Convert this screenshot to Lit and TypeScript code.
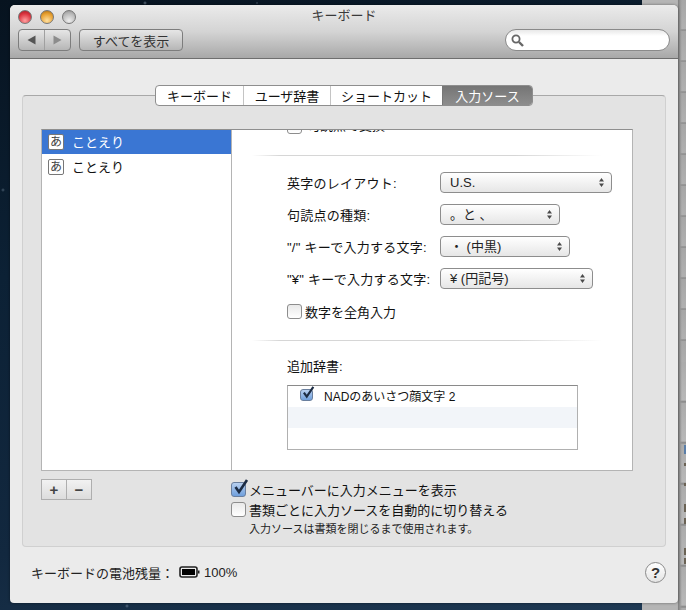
import { LitElement, html, css } from "lit";
import { customElement } from "lit/decorators.js";

const updown = html`<svg class="ud" width="7" height="11" viewBox="0 0 7 11"><path d="M3.5 1 L6 4.5 L1 4.5Z M3.5 10 L6 6.5 L1 6.5Z" fill="#4a4a4a"/></svg>`;
const check = () => html`<svg class="chk" width="17" height="17" viewBox="0 0 17 17"><path d="M3.5 8 L7 13 L15 1" fill="none" stroke="#1c2c44" stroke-width="2.6"/></svg>`;

@customElement("app-root")
export class AppRoot extends LitElement {
  static styles = css`
    :host {
      display: block; width: 686px; height: 610px; overflow: hidden; position: relative;
      background:
        radial-gradient(circle at 3px 190px, rgba(180,200,220,.35) 0, transparent 2px),
        radial-gradient(circle at 145px 3px, rgba(180,200,220,.5) 0, transparent 2px),
        radial-gradient(circle at 257px 3px, rgba(180,200,220,.3) 0, transparent 1.5px),
        radial-gradient(circle at 127px 606px, rgba(180,200,220,.4) 0, transparent 2px),
        linear-gradient(165deg, #07131f 0%, #0c2135 35%, #12283f 70%, #1f3a55 100%);
      font-family: "Liberation Sans", "Noto Sans CJK JP", sans-serif; color: #111;
    }
    .behind { position: absolute; left: 642px; top: 0; width: 44px; height: 610px;
      background: linear-gradient(90deg, #b5b5b5 0, #b5b5b5 80%, #a2a2a2 84%, #c8c8c8 100%); }
    .behind-lines { position: absolute; left: 678px; top: 0; width: 8px; height: 362px;
      background: linear-gradient(90deg, #7c7c7c 0, #989898 25%, transparent 50%),
        repeating-linear-gradient(180deg, #a6a6a6 0, #b0b0b0 29px, #7f7f7f 30px, #a6a6a6 31px); }
    .behind-low { position: absolute; left: 678px; top: 362px; width: 8px; height: 248px;
      background: linear-gradient(90deg, #7c7c7c 0, #989898 25%, transparent 50%),
        repeating-linear-gradient(180deg, #ababab 0, #b8b8b8 38px, #7f7f7f 40px, #ababab 41px); }
    .spot { position: absolute; left: 684px; width: 2px; background: #6b6355; }
    .spot.blue { background: #5a7ea8; }
    .window { position: absolute; left: 10px; top: 5px; width: 668px; height: 598px; background: #ebebeb;
      border-radius: 5px 5px 4px 4px; display: flex; flex-direction: column; overflow: hidden; box-shadow: 0 0 3px rgba(0,0,0,.45); }
    .titlebar { height: 54px; flex: none; box-sizing: border-box; border-bottom: 1px solid #6e6e6e;
      background: linear-gradient(180deg, #ebebeb 0%, #d4d4d4 50%, #a8a8a8 100%); position: relative; }
    .lights { position: absolute; left: 8px; top: 5px; display: flex; gap: 8px; }
    .light { width: 12px; height: 12px; border-radius: 50%; border: 0.5px solid #777; }
    .red { background: radial-gradient(circle at 50% 80%, #ffa0a0, #dc3540 60%, #a01820); }
    .amber { background: radial-gradient(circle at 50% 80%, #ffe0a0, #e8a030 60%, #a86a10); }
    .gray { background: radial-gradient(circle at 50% 80%, #eee, #bbb 60%, #8f8f8f); }
    .title { position: absolute; left: 0; right: 0; top: 2px; text-align: center; font-size: 13px; line-height: 18px; color: #3a3a3a; }
    .tools { position: absolute; left: 8px; top: 24px; right: 8px; display: flex; align-items: center; }
    .btn { height: 22px; box-sizing: border-box; border: 1px solid #7d7d7d; border-radius: 4px;
      background: linear-gradient(180deg, #e6e6e6, #b6b6b6); display: flex; align-items: center; justify-content: center; }
    .nav { width: 53px; }
    .nav span { flex: 1; display: flex; justify-content: center; align-items: center; height: 100%; }
    .nav span + span { border-left: 1px solid #a0a0a0; }
    .all { width: 104px; margin-left: 8px; font-size: 13px; color: #333; }
    .search { margin-left: auto; width: 165px; height: 22px; box-sizing: border-box; border: 1px solid #8a8a8a;
      border-radius: 11px; background: linear-gradient(180deg, #e8e8e8, #fff 30%); display: flex; align-items: center; padding-left: 5px; }
    .body { flex: 1; position: relative; padding: 36px 12px 0; }
    .box { height: 452px; box-sizing: border-box; background: #e3e3e3; border: 1px solid #d0d0d0; border-top-color: #a8a8a8; border-radius: 4px;
      position: relative; padding: 33px 32px 0 18px; }
    .tabs { position: absolute; left: 132px; top: -11px; width: 378px; height: 21px; box-sizing: border-box; display: flex; background: #fff;
      border: 1px solid #8e8e8e; border-radius: 4px; font-size: 13px; overflow: hidden; }
    .tab { display: flex; align-items: center; justify-content: center; box-sizing: border-box; height: 100%; color: #111; }
    .tab + .tab { border-left: 1px solid #c4c4c4; }
    .t1 { width: 87px; } .t2 { width: 87px; } .t3 { width: 112px; }
    .t4 { flex: 1; background: linear-gradient(180deg, #757575, #8d8d8d); color: #fff; border-left: 1px solid #777 !important; }
    .panel { height: 342px; box-sizing: border-box; display: flex; background: #fff; border: 1px solid #b4b4b4; border-top-color: #8f8f8f; }
    .list { width: 190px; flex: none; box-sizing: border-box; border-right: 1px solid #b4b4b4; display: flex; flex-direction: column; gap: 1px; }
    .row { height: 24px; display: flex; align-items: center; padding-left: 6px; gap: 8px; font-size: 13px; line-height: 22px; }
    .row .txt { padding-top: 2px; }
    .row.sel { background: #3a76d3; color: #fff; }
    .glyph { width: 16px; height: 16px; box-sizing: border-box; border: 1px solid #777; border-radius: 2px; background: #fff; color: #444;
      font-size: 12px; line-height: 14px; text-align: center; }
    .detail { flex: 1; position: relative; padding-left: 55px; overflow: hidden; font-size: 13px; }
    .cut { height: 25px; position: relative; overflow: hidden; margin-left: -55px; }
    .cutinner { position: absolute; left: 55px; top: -12px; display: flex; align-items: center; gap: 5px; line-height: 16px; }
    .rule { height: 1px; margin-left: -35px; width: 350px; background: linear-gradient(90deg, rgba(200,200,200,0) 0, #d6d6d6 8%, #d6d6d6 75%, rgba(214,214,214,0)); }
    .form { display: grid; grid-template-columns: 153px auto; row-gap: 11px; margin-top: 16px; align-items: center; justify-content: start; }
    .lbl { height: 21px; line-height: 23px; white-space: nowrap; letter-spacing: 0.25px; }
    .sel-btn { height: 21px; box-sizing: border-box; border: 1px solid #8d8d8d; border-radius: 4px; background: linear-gradient(180deg, #fff, #e6e6e6);
      display: flex; align-items: center; justify-content: space-between; padding: 0 6px 0 9px; font-size: 13px; color: #222; line-height: 1; }
    .cb { width: 15px; height: 15px; box-sizing: border-box; border: 1px solid #8d8d8d; border-radius: 3px; background: linear-gradient(180deg, #e9e9e9, #fff); position: relative; flex: none; }
    .cb.small { width: 13px; height: 12px; }
    .cb.on { background: linear-gradient(180deg, #b8d0f0, #6f9fdc); border-color: #6a7f9e; }
    .chk { position: absolute; left: 0; top: -4px; }
    .cb.small .chk { width: 14px; height: 14px; top: -4px; }
    .inline { display: flex; align-items: center; gap: 3px; height: 18px; }
    .num { margin-top: 13px; }
    .rule2 { margin-top: 20px; }
    .dlabel { margin-top: 16px; height: 20px; line-height: 20px; }
    .dict { margin-top: 8px; width: 291px; height: 65px; box-sizing: border-box; border: 1px solid #b0b0b0; border-top-color: #8a8a8a; }
    .drow { height: 21px; box-sizing: border-box; display: flex; align-items: center; padding-left: 12px; gap: 11px; font-size: 12px; }
    .drow.first { padding-bottom: 3px; }
    .drow.alt { background: #f2f5f9; }
    .bottom { display: flex; margin-top: 8px; }
    .pm { display: flex; width: 51px; height: 21px; box-sizing: border-box; border: 1px solid #aeaeae; background: linear-gradient(180deg, #f2f2f2, #dcdcdc); font-size: 15px; font-weight: 700; color: #444; }
    .pm span { flex: 1; display: flex; align-items: center; justify-content: center; line-height: 1; }
    .pm span + span { border-left: 1px solid #aeaeae; }
    .opts { margin-left: 139px; font-size: 13px; display: flex; flex-direction: column; }
    .opt { display: flex; align-items: center; gap: 3px; height: 20px; white-space: nowrap; }
    .hint { font-size: 11px; margin: 2px 0 0 18px; line-height: 16px; color: #222; }
    .foot { position: absolute; left: 21px; right: 12px; top: 501px; height: 24px; display: flex; align-items: center; font-size: 13px; color: #222; }
    .bat { margin-left: 5px; margin-right: 4px; }
    .help { margin-left: auto; width: 21px; height: 21px; box-sizing: border-box; border: 1px solid #8a8a8a; border-radius: 50%;
      background: linear-gradient(180deg, #fff, #e4e4e4); font: 700 15px/19px "Liberation Sans", sans-serif; text-align: center; color: #333; }
  `;

  render() {
    return html`
      <div class="behind"></div><div class="behind-lines"></div><div class="behind-low"></div>
      <div class="spot blue" style="top:445px;height:9px"></div>
      ${[[463, 3], [483, 3], [504, 8], [518, 6], [548, 7], [558, 6]].map(([t, h]) => html`<div class="spot" style="top:${t}px;height:${h}px"></div>`)}
      <div class="window">
        <div class="titlebar">
          <div class="lights"><div class="light red"></div><div class="light amber"></div><div class="light gray"></div></div>
          <div class="title">キーボード</div>
          <div class="tools">
            <div class="btn nav">
              <span><svg width="9" height="10" viewBox="0 0 9 10"><path d="M0.5 5 L8.5 0.5 V9.5Z" fill="#555"/></svg></span>
              <span><svg width="9" height="10" viewBox="0 0 9 10"><path d="M8.5 5 L0.5 0.5 V9.5Z" fill="#8c8c8c"/></svg></span>
            </div>
            <div class="btn all">すべてを表示</div>
            <div class="search">
              <svg width="13" height="13" viewBox="0 0 13 13"><circle cx="5" cy="5" r="3.6" fill="none" stroke="#666" stroke-width="1.8"/><path d="M8 8 L12 12" stroke="#666" stroke-width="2.4"/></svg>
            </div>
          </div>
        </div>
        <div class="body">
          <div class="box">
            <div class="tabs">
              <div class="tab t1">キーボード</div><div class="tab t2">ユーザ辞書</div><div class="tab t3">ショートカット</div><div class="tab t4">入力ソース</div>
            </div>
            <div class="panel">
              <div class="list">
                <div class="row sel"><span class="glyph">あ</span><span class="txt">ことえり</span></div>
                <div class="row"><span class="glyph">あ</span><span class="txt">ことえり</span></div>
              </div>
              <div class="detail">
                <div class="cut"><div class="cutinner"><span class="cb"></span>句読点で変換</div></div>
                <div class="rule"></div>
                <div class="form">
                  <div class="lbl">英字のレイアウト:</div><div class="sel-btn" style="width:172px">U.S.${updown}</div>
                  <div class="lbl">句読点の種類:</div><div class="sel-btn" style="width:120px">。と 、${updown}</div>
                  <div class="lbl">"/" キーで入力する文字:</div><div class="sel-btn" style="width:130px">・ (中黒)${updown}</div>
                  <div class="lbl">"¥" キーで入力する文字:</div><div class="sel-btn" style="width:153px">¥ (円記号)${updown}</div>
                </div>
                <div class="inline num"><span class="cb"></span>数字を全角入力</div>
                <div class="rule rule2"></div>
                <div class="dlabel">追加辞書:</div>
                <div class="dict">
                  <div class="drow first"><span class="cb on small">${check()}</span>NADのあいさつ顔文字 2</div>
                  <div class="drow alt"></div>
                  <div class="drow"></div>
                </div>
              </div>
            </div>
            <div class="bottom">
              <div class="pm"><span>+</span><span>−</span></div>
              <div class="opts">
                <div class="opt"><span class="cb on">${check()}</span>メニューバーに入力メニューを表示</div>
                <div class="opt"><span class="cb"></span>書類ごとに入力ソースを自動的に切り替える</div>
                <div class="hint">入力ソースは書類を閉じるまで使用されます。</div>
              </div>
            </div>
          </div>
          <div class="foot">
            キーボードの電池残量：
            <svg class="bat" width="21" height="12" viewBox="0 0 21 12"><rect x="1" y="1" width="17" height="10" rx="2" fill="none" stroke="#222" stroke-width="1.6"/><rect x="3" y="3" width="13" height="6" fill="#000"/><rect x="19" y="4.5" width="1.5" height="3" fill="#222"/></svg>
            100%
            <div class="help">?</div>
          </div>
        </div>
      </div>
    `;
  }
}
